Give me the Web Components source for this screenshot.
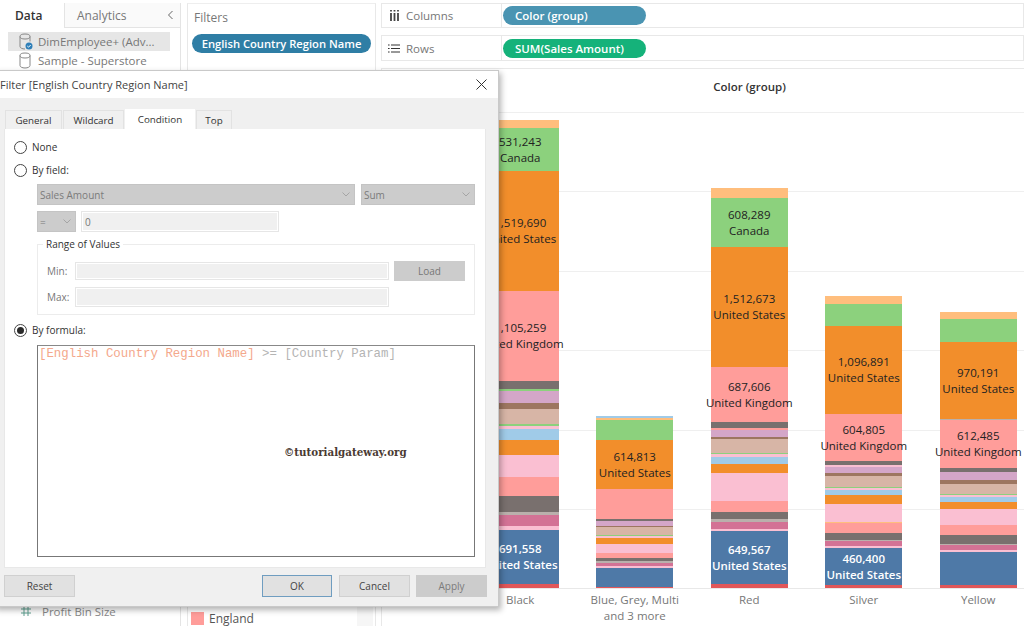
<!DOCTYPE html>
<html>
<head>
<meta charset="utf-8">
<style>
  html, body { margin: 0; padding: 0; height: 100%; overflow: hidden; background: #fff; }
  body { font-family: "Open Sans", "Liberation Sans", sans-serif; }
</style>
</head>
<body>
<app-shell>
  <side-panel slot="side"></side-panel>
  <filters-panel slot="filters"></filters-panel>
  <shelf-row slot="shelves" style="height:25px" label="Columns" icon="columns" pill="Color (group)" color="#4a94b2"></shelf-row>
  <shelf-row slot="shelves" label="Rows" icon="rows" pill="SUM(Sales Amount)" color="#15b27a"></shelf-row>
  <bar-chart slot="chart"></bar-chart>
  <filter-dialog slot="dialog"></filter-dialog>
</app-shell>

<script>
class AppShell extends HTMLElement {
  constructor() {
    super();
    this.attachShadow({ mode: 'open' });
    this.shadowRoot.innerHTML = `
      <style>
        :host { display: grid; grid-template-columns: 181px 190px 1fr; column-gap: 5px; width: 1024px; height: 626px; padding-top: 3px; box-sizing: border-box; position: relative; overflow: hidden; background: #fff; }
        .main { display: flex; flex-direction: column; gap: 7px; min-width: 0; }
        .dlg { position: absolute; left: -6px; top: 70px; z-index: 5; }
      </style>
      <slot name="side"></slot>
      <slot name="filters"></slot>
      <div class="main">
        <slot name="shelves"></slot>
        <slot name="chart"></slot>
      </div>
      <div class="dlg"><slot name="dialog"></slot></div>
    `;
  }
}

class SidePanel extends HTMLElement {
  constructor() {
    super();
    this.attachShadow({ mode: 'open' });
    this.shadowRoot.innerHTML = `
      <style>
        :host { display: flex; flex-direction: column; box-sizing: border-box; border-right: 1px solid #e4e4e4; font-size: 12px; color: #777; height: 623px; }
        .tabs { display: flex; height: 25px; }
        .tab { display: flex; align-items: center; }
        .tab.on { width: 64px; padding-left: 15px; box-sizing: border-box; color: #333; font-weight: 600; }
        .tab.off { flex: 1; padding-left: 12px; background: #fafafa; border: 1px solid #e4e4e4; border-top: 0; border-right: 0; color: #777; justify-content: space-between; padding-right: 6px; }
        .src { display: flex; flex-direction: column; padding: 4px 10px 0 8px; font-size: 11.5px; }
        .row { display: flex; align-items: center; gap: 5px; height: 19px; padding-left: 11px; white-space: nowrap; }
        .row.on { background: #e6e6e6; }
        .bottom { margin-top: auto; padding: 0 0 6px 20px; display: flex; align-items: center; gap: 10px; height: 18px; box-sizing: content-box; color: #888; font-size: 11.5px; }
        svg { flex: none; }
      </style>
      <div class="tabs">
        <div class="tab on">Data</div>
        <div class="tab off">Analytics
          <svg width="7" height="10" viewBox="0 0 7 10"><path d="M5.5 1 1.5 5l4 4" fill="none" stroke="#666"/></svg>
        </div>
      </div>
      <div class="src">
        <div class="row on">
          <svg width="14" height="17" viewBox="0 0 14 17"><ellipse cx="6" cy="3.5" rx="5" ry="2.5" fill="none" stroke="#888"/><path d="M1 3.5v10c0 1.4 2.2 2.5 5 2.5M11 3.5v5" fill="none" stroke="#888"/><circle cx="10" cy="13" r="3.5" fill="#2f7fb8"/><path d="M8.3 13l1.2 1.2 2.2-2.2" fill="none" stroke="#fff"/></svg>
          <span>DimEmployee+ (Adv...</span>
        </div>
        <div class="row">
          <svg width="14" height="17" viewBox="0 0 14 17"><ellipse cx="6" cy="3.5" rx="5" ry="2.5" fill="none" stroke="#888"/><path d="M1 3.5v10c0 1.4 2.2 2.5 5 2.5s5-1.1 5-2.5v-10" fill="none" stroke="#888"/></svg>
          <span>Sample - Superstore</span>
        </div>
      </div>
      <div class="bottom">
        <svg width="12" height="12" viewBox="0 0 12 12"><path d="M4 1v10M8 1v10M1 4h10M1 8h10" stroke="#5d9e8e" fill="none"/></svg>
        <span>Profit Bin Size</span>
      </div>
    `;
  }
}

class FiltersPanel extends HTMLElement {
  constructor() {
    super();
    this.attachShadow({ mode: 'open' });
    this.shadowRoot.innerHTML = `
      <style>
        :host { display: flex; flex-direction: column; box-sizing: border-box; height: 626px; border: 1px solid #e8e8e8; border-top: 1px solid #eee; margin-left: 1px; font-size: 12px; color: #777; background: #fff; }
        .h { padding: 5px 0 0 6px; height: 15px; box-sizing: content-box; }
        .pill { align-self: flex-start; margin: 10px 0 0 4px; height: 19px; width: 179px; box-sizing: border-box; text-align: center; border-radius: 10px; background: #2f7ea5; color: #fff; font-weight: 600; font-size: 11.2px; line-height: 19px; white-space: nowrap; }
        .legend { margin-top: auto; margin-bottom: 3px; display: flex; align-items: center; gap: 5px; padding: 0 0 0 3px; height: 14px; color: #555; overflow: visible; position: relative; }
        .sw { width: 13px; height: 13px; background: #ff9d9a; }
        .scroll { position: absolute; right: 2px; top: -8px; bottom: -3px; width: 16px; background: #f6f6f6; }
      </style>
      <div class="h">Filters</div>
      <div class="pill">English Country Region Name</div>
      <div class="legend"><span class="sw"></span><span>England</span><span class="scroll"></span></div>
    `;
  }
}

class ShelfRow extends HTMLElement {
  connectedCallback() {
    if (this.shadowRoot) return;
    const label = this.getAttribute('label');
    const pill = this.getAttribute('pill');
    const color = this.getAttribute('color');
    const icon = this.getAttribute('icon') === 'columns'
      ? '<svg width="9" height="11" viewBox="0 0 9 11"><path d="M1 3v8M4.5 3v8M8 3v8" stroke="#444" stroke-width="1.8"/><path d="M1 0v1.5M4.5 0v1.5M8 0v1.5" stroke="#444" stroke-width="1.8"/></svg>'
      : '<svg width="12" height="9" viewBox="0 0 12 9"><path d="M0 1h1.6M3 1h9M0 4.5h1.6M3 4.5h9M0 8h1.6M3 8h9" stroke="#333" fill="none"/></svg>';
    this.attachShadow({ mode: 'open' });
    this.shadowRoot.innerHTML = `
      <style>
        :host { display: flex; height: 26px; box-sizing: border-box; border: 1px solid #e8e8e8; font-size: 11.5px; color: #777; }
        .lab { width: 120px; flex: none; box-sizing: border-box; padding-left: 6px; display: flex; align-items: center; gap: 6px; border-right: 1px solid #e8e8e8; }
        .ic { width: 12px; display: flex; justify-content: center; flex: none; }
        .slot { flex: 1; display: flex; align-items: center; padding-left: 1px; }
        .pill { width: 143px; height: 19px; box-sizing: border-box; padding-left: 12px; border-radius: 10px; background: ${color}; color: #fff; font-weight: 600; line-height: 19px; white-space: nowrap; }
      </style>
      <div class="lab"><span class="ic">${icon}</span><span>${label}</span></div>
      <div class="slot"><div class="pill">${pill}</div></div>
    `;
  }
}

// segment colours
const C = {
  lo: '#ffbe7d', gr: '#8cd17d', or: '#f28e2b', pk: '#ff9d9a', dg: '#79706e', mv: '#d4a6c8',
  br: '#9d7660', tn: '#d7b5a6', lb: '#a0cbe8', lp: '#fabfd2', rs: '#d37295', bl: '#4e79a7',
  rd: '#e15759', pg: '#bab0ac'
};

// [colour, height, label line 1, label line 2]
const BARS = [
  { name: 'Black', segs: [['lo',8],['gr',43,'531,243','Canada'],['or',120,'1,519,690','United States'],['pk',90,'1,105,259','United Kingdom'],['dg',8],['gr',2],['mv',12],['br',6],['tn',15],['gr',2],['lp',3],['lb',11],['or',15],['lp',22],['pk',19],['dg',16],['pg',3],['rs',11],['lp',4],['bl',54,'691,558','United States'],['rd',4]] },
  { name: 'Blue, Grey, Multi|and 3 more', segs: [['lb',2],['lo',2],['gr',20],['or',49,'614,813','United States'],['pk',30],['dg',2],['mv',5],['br',1],['tn',8],['gr',1],['lp',2],['or',6],['lp',9],['pk',5],['dg',3],['pg',2],['rs',3],['lp',2],['bl',19],['rd',1]] },
  { name: 'Red', segs: [['lo',10],['gr',49,'608,289','Canada'],['or',120,'1,512,673','United States'],['pk',55,'687,606','United Kingdom'],['dg',6],['pk',2],['mv',7],['br',2],['tn',14],['gr',1],['lp',3],['lb',7],['or',9],['lp',28],['pk',11],['dg',7],['pg',3],['rs',7],['lp',2],['bl',53,'649,567','United States'],['rd',4]] },
  { name: 'Silver', segs: [['lo',8],['gr',22],['or',88,'1,096,891','United States'],['pk',47,'604,805','United Kingdom'],['dg',4],['lp',2],['mv',6],['br',3],['tn',11],['gr',1],['lp',2],['lb',5],['or',9],['lp',18],['lo',1],['pk',10],['dg',7],['pg',1],['rs',5],['lp',2],['bl',37,'460,400','United States'],['rd',3]] },
  { name: 'Yellow', segs: [['lo',7],['gr',23],['or',77,'970,191','United States'],['pg',1],['pk',48,'612,485','United Kingdom'],['dg',4],['mv',8],['br',4],['tn',10],['gr',1],['lp',2],['lb',5],['or',7],['lp',16],['pk',10],['dg',9],['pg',1],['rs',5],['lp',2],['bl',33],['rd',3]] }
];

class StackedBar extends HTMLElement {
  set data(bar) {
    this.attachShadow({ mode: 'open' });
    const segs = bar.segs.map(([c, h, a, b]) => {
      const dark = c === 'bl';
      const txt = a ? `<span class="t${dark ? ' w' : ''}">${a}<br>${b}</span>` : '';
      return `<div class="s" style="height:${h}px;background:${C[c]}">${txt}</div>`;
    }).join('');
    this.shadowRoot.innerHTML = `
      <style>
        :host { display: flex; flex-direction: column; width: 77px; flex: none; }
        .s { display: flex; align-items: center; justify-content: center; flex: none; position: relative; overflow: visible; }
        .t { font-size: 11.5px; line-height: 16px; color: #222; text-align: center; white-space: nowrap; position: relative; z-index: 1; }
        .t.w { color: #fff; font-weight: 600; }
      </style>
      ${segs}
    `;
  }
}

class BarChart extends HTMLElement {
  constructor() {
    super();
    this.attachShadow({ mode: 'open' });
    this.shadowRoot.innerHTML = `
      <style>
        :host { display: flex; flex-direction: column; flex: 1; min-height: 0; border-top: 1px solid #e8e8e8; border-left: 1px solid #e8e8e8; box-sizing: border-box; }
        .title { height: 43px; box-sizing: border-box; padding-top: 11px; padding-left: 93px; text-align: center; font-size: 11.5px; font-weight: 600; line-height: 14px; color: #333; }
        .plot { height: 477px; display: flex; box-sizing: border-box; padding-left: 81px; align-items: flex-end; background: repeating-linear-gradient(to bottom, #efefef 0 1px, transparent 1px 79.4px); border-bottom: 1px solid #e8e8e8; }
        .cell { width: 114.5px; flex: none; display: flex; justify-content: center; }
        .axis { display: flex; padding-left: 81px; }
        .lab { width: 114.5px; flex: none; text-align: center; font-size: 11.5px; line-height: 16px; color: #777; padding-top: 3px; }
      </style>
      <div class="title">Color (group)</div>
      <div class="plot"></div>
      <div class="axis"></div>
    `;
    const plot = this.shadowRoot.querySelector('.plot');
    const axis = this.shadowRoot.querySelector('.axis');
    BARS.forEach(bar => {
      const cell = document.createElement('div');
      cell.className = 'cell';
      const el = document.createElement('stacked-bar');
      el.data = bar;
      cell.appendChild(el);
      plot.appendChild(cell);
      const lab = document.createElement('div');
      lab.className = 'lab';
      lab.innerHTML = bar.name.replace('|', '<br>');
      axis.appendChild(lab);
    });
  }
}

class RadioRow extends HTMLElement {
  connectedCallback() {
    if (this.shadowRoot) return;
    this.attachShadow({ mode: 'open' });
    const on = this.hasAttribute('checked');
    this.shadowRoot.innerHTML = `
      <style>
        :host { display: flex; align-items: center; gap: 5px; height: 16px; font-size: 10px; color: #333; }
        .r { width: 11px; height: 11px; border: 1px solid #444; border-radius: 50%; background: #fff; display: flex; align-items: center; justify-content: center; flex: none; }
        .d { width: 7px; height: 7px; border-radius: 50%; background: #2a2a2a; }
      </style>
      <span class="r">${on ? '<span class="d"></span>' : ''}</span><slot></slot>
    `;
  }
}

class FakeSelect extends HTMLElement {
  constructor() {
    super();
    this.attachShadow({ mode: 'open' });
    this.shadowRoot.innerHTML = `
      <style>
        :host { display: flex; align-items: center; justify-content: space-between; box-sizing: border-box; height: 21px; background: #cccccc; border: 1px solid #c4c4c4; padding: 0 4px 0 2px; font-size: 10px; color: #7b7b7b; flex: none; }
        svg { flex: none; }
      </style>
      <span><slot></slot></span>
      <svg width="8" height="5" viewBox="0 0 8 5"><path d="M.5.5 4 4 7.5.5" fill="none" stroke="#a5a5a5"/></svg>
    `;
  }
}

class FilterDialog extends HTMLElement {
  constructor() {
    super();
    this.attachShadow({ mode: 'open' });
    this.shadowRoot.innerHTML = `
      <style>
        :host { display: flex; flex-direction: column; width: 505px; height: 537px; box-sizing: border-box; background: #f0f0f0; border: 1px solid #c9c9c9; box-shadow: 2px 3px 6px rgba(0,0,0,.3); font-family: "Open Sans", "Liberation Sans", sans-serif; font-size: 10px; color: #333; }
        .title { height: 27px; flex: none; background: #fff; display: flex; align-items: center; justify-content: space-between; padding: 0 11px 0 5px; font-size: 11px; color: #444; }
        .tabs { display: flex; align-items: flex-end; height: 31px; flex: none; padding-left: 10px; gap: 1px; }
        .tab { height: 19px; background: #f0f0f0; border: 1px solid #e2e2e2; border-bottom: 0; box-sizing: border-box; display: flex; align-items: center; justify-content: center; font-size: 9.8px; }
        .tab.on { background: #fff; height: 20px; border: 0; }
        .body { width: 482px; height: 439px; margin-left: 9px; box-sizing: border-box; background: #fff; flex: none; padding: 10px 10px 0 9px; display: flex; flex-direction: column; border: 1px solid #e8e8e8; border-top: 0; }
        .indent { margin-left: 23px; display: flex; flex-direction: column; }
        .line { display: flex; gap: 6px; }
        .in { background: #f0f0f0; border: 1px solid #e6e6e6; outline: 1px solid #fff; outline-offset: -2px; box-sizing: border-box; height: 20px; display: flex; align-items: center; padding-left: 3px; color: #777; flex: none; }
        fieldset { margin: 6px 0 0; padding: 0; border: 1px solid #ececec; height: 77px; box-sizing: border-box; position: relative; display: flex; flex-direction: column; }
        legend { margin-left: 5px; padding: 0 3px; font-size: 10px; line-height: 12px; color: #333; }
        .fr { display: flex; align-items: center; height: 20px; padding-left: 9px; color: #777; }
        .fr span.l { width: 28px; flex: none; }
        .load { width: 71px; height: 20px; margin-left: 5px; background: #ccc; color: #777; display: flex; align-items: center; justify-content: center; flex: none; }
        .ta { margin-top: 7px; height: 212px; box-sizing: border-box; border: 1px solid #777; border-top-color: #888; padding: 1px 1px 0; font-family: "Liberation Mono", monospace; font-size: 12.4px; line-height: 14px; color: #b4b4b4; position: relative; white-space: nowrap; }
        .ta .f { color: #f4a88c; }
        .mark { position: absolute; left: 246px; top: 99px; font-family: "DejaVu Serif", serif; font-weight: bold; font-size: 10.3px; color: #4a3a32; }
        .foot { flex: 1; display: flex; align-items: flex-start; padding: 7px 0 0 9px; }
        .b { width: 71px; height: 22px; box-sizing: border-box; background: #e1e1e1; border: 1px solid #d0d0d0; display: flex; align-items: center; justify-content: center; color: #444; margin-right: 6px; flex: none; }
        .b.ok { width: 70px; margin-right: 7px; border-color: #6f9dc0; }
        .b.no { background: #ccc; color: #7b7b7b; border-color: #ccc; margin-right: 11px; }
        .sp { flex: 1; }
      </style>
      <div class="title">
        <span>Filter [English Country Region Name]</span>
        <svg width="11" height="11" viewBox="0 0 11 11"><path d="M.5.5l10 10M10.5.5l-10 10" stroke="#333" fill="none"/></svg>
      </div>
      <div class="tabs">
        <div class="tab" style="width:57px">General</div>
        <div class="tab" style="width:61px">Wildcard</div>
        <div class="tab on" style="width:70px">Condition</div>
        <div class="tab" style="width:36px">Top</div>
      </div>
      <div class="body">
        <radio-row style="margin-bottom:7px">None</radio-row>
        <radio-row>By field:</radio-row>
        <div class="indent" style="margin-top:6px">
          <div class="line">
            <fake-select style="width:318px">Sales Amount</fake-select>
            <fake-select style="width:114px">Sum</fake-select>
          </div>
          <div class="line" style="margin-top:6px;gap:5px">
            <fake-select style="width:39px">=</fake-select>
            <div class="in" style="width:198px;height:21px">0</div>
          </div>
          <fieldset>
            <legend>Range of Values</legend>
            <div class="fr" style="margin-top:11px"><span class="l">Min:</span><div class="in" style="width:314px;height:18px"></div><div class="load">Load</div></div>
            <div class="fr" style="margin-top:6px"><span class="l">Max:</span><div class="in" style="width:314px"></div></div>
          </fieldset>
        </div>
        <radio-row checked style="margin-top:7px">By formula:</radio-row>
        <div class="indent">
          <div class="ta"><span class="f">[English Country Region Name]</span> &gt;= [Country Param]<span class="mark">©tutorialgateway.org</span></div>
        </div>
      </div>
      <div class="foot">
        <div class="b">Reset</div>
        <span class="sp"></span>
        <div class="b ok">OK</div>
        <div class="b">Cancel</div>
        <div class="b no">Apply</div>
      </div>
    `;
  }
}

customElements.define('stacked-bar', StackedBar);
customElements.define('radio-row', RadioRow);
customElements.define('fake-select', FakeSelect);
customElements.define('app-shell', AppShell);
customElements.define('side-panel', SidePanel);
customElements.define('filters-panel', FiltersPanel);
customElements.define('shelf-row', ShelfRow);
customElements.define('bar-chart', BarChart);
customElements.define('filter-dialog', FilterDialog);
</script>
</body>
</html>
